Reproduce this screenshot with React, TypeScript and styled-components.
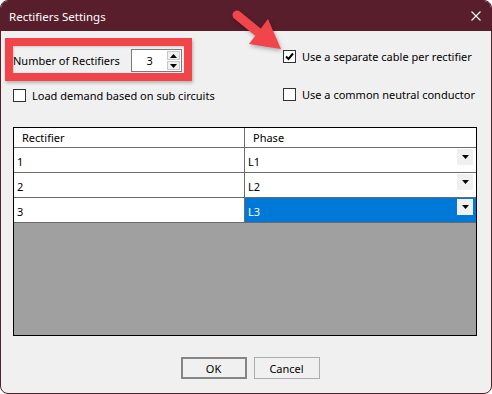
import React from "react";
import styled, { createGlobalStyle } from "styled-components";

const Global = createGlobalStyle`
  html, body { margin: 0; padding: 0; background: #ffffff; }
  body { font-family: "Noto Sans", "Open Sans", sans-serif; }
`;

const MAROON = "#581e2b";
const RED = "#f2444b";

const Window = styled.div`
  position: relative;
  width: 492px;
  height: 394px;
  box-sizing: border-box;
  border: 1px solid ${MAROON};
  border-radius: 8px;
  overflow: hidden;
  background: #f0f0f0;
  display: flex;
  flex-direction: column;
  font-size: 11px;
  color: #000;
`;

const TitleBar = styled.div`
  height: 30px;
  background: ${MAROON};
  display: flex;
  align-items: center;
  justify-content: space-between;
  padding: 0 10px 0 8px;
  flex: none;
`;

const Title = styled.span`
  color: #fff;
  font-size: 11.5px;
  line-height: 1;
  margin-top: 1px;
`;

const Body = styled.div`
  flex: 1;
  display: flex;
  flex-direction: column;
  padding: 18px 14px 0 12px;
`;

const Options = styled.div`
  display: grid;
  grid-template-columns: 270px 1fr;
  grid-template-rows: 23px 13px;
  row-gap: 16px;
`;

const SpinRow = styled.div`
  display: flex;
  align-items: center;
  gap: 11px;
`;

const Spinner = styled.div`
  display: flex;
  width: 51px;
  height: 23px;
  flex: none;
  box-sizing: border-box;
  border: 1px solid #7a7a7a;
  background: #fff;
`;

const SpinValue = styled.div`
  flex: 1;
  min-width: 0;
  display: flex;
  align-items: center;
  justify-content: flex-end;
  padding-right: 14px;
`;

const SpinButtons = styled.div`
  width: 14px;
  flex: none;
  display: flex;
  flex-direction: column;
  gap: 1px;
  padding: 1px 1px 1px 0;
  box-sizing: border-box;
`;

const SpinBtn = styled.div`
  flex: 1;
  background: #f0f0f0;
  border: 1px solid #c8c8c8;
  display: flex;
  align-items: center;
  justify-content: center;
`;

const CheckRow = styled.label<{ $top?: number }>`
  display: flex;
  align-items: center;
  gap: 6px;
  height: 13px;
  align-self: start;
  margin-top: ${(p) => p.$top ?? 0}px;
  white-space: nowrap;
`;

const Box = styled.span`
  width: 13px;
  height: 13px;
  box-sizing: border-box;
  border: 1px solid #333;
  background: #fff;
  display: flex;
  align-items: center;
  justify-content: center;
  flex: none;
`;

const Table = styled.div`
  margin-top: 26px;
  height: 209px;
  box-sizing: border-box;
  border: 1px solid #000;
  background: #a0a0a0;
  display: grid;
  grid-template-columns: 231px 1fr;
  grid-auto-rows: min-content;
`;

const HeadCell = styled.div<{ $last?: boolean }>`
  height: 20px;
  box-sizing: border-box;
  background: #fff;
  border-bottom: 1px solid #6b6b6b;
  border-right: ${(p) => (p.$last ? "none" : "1px solid #6b6b6b")};
  display: flex;
  align-items: center;
  padding-left: 8px;
`;

const Cell = styled.div<{ $last?: boolean; $selected?: boolean }>`
  position: relative;
  height: 25px;
  box-sizing: border-box;
  background: ${(p) => (p.$selected ? "#0078d7" : "#fff")};
  color: ${(p) => (p.$selected ? "#fff" : "#000")};
  border-bottom: 1px solid #6b6b6b;
  border-right: ${(p) => (p.$last ? "none" : "1px solid #6b6b6b")};
  display: flex;
  align-items: center;
  padding-left: 3px;
  padding-top: 3px;
`;

const DropBtn = styled.div`
  position: absolute;
  right: 3px;
  top: 1px;
  width: 16px;
  height: 16px;
  background: #f0f0f0;
  display: flex;
  align-items: center;
  justify-content: center;
`;

const Buttons = styled.div`
  margin-top: 21px;
  display: flex;
  justify-content: center;
  gap: 7px;
  padding-left: 10px;
`;

const Button = styled.button<{ $default?: boolean }>`
  width: 66px;
  height: 22px;
  box-sizing: border-box;
  border: ${(p) => (p.$default ? "2px solid #858585" : "1px solid #adadad")};
  background: #f0f0f0;
  font-family: inherit;
  font-size: 11px;
  color: #000;
  padding: 0;
`;

const Highlight = styled.div`
  position: absolute;
  left: 4px;
  top: 37px;
  width: 187px;
  height: 43px;
  box-sizing: border-box;
  border: 8px solid ${RED};
  box-shadow: 1px 2px 3px rgba(0, 0, 0, 0.25), inset 1px 1px 2px rgba(0,0,0,0.15);
  pointer-events: none;
`;

const ArrowSvg = styled.svg`
  position: absolute;
  left: 226px;
  top: 0;
  filter: drop-shadow(1px 2px 2px rgba(0, 0, 0, 0.3));
  pointer-events: none;
`;

const Tri = ({ up, color = "#000" }: { up?: boolean; color?: string }) => (
  <svg width="7" height="4" viewBox="0 0 7 4">
    <polygon points={up ? "0,4 7,4 3.5,0" : "0,0 7,0 3.5,4"} fill={color} />
  </svg>
);

const Check = ({ checked, children, top }: { checked?: boolean; children: React.ReactNode; top?: number }) => (
  <CheckRow $top={top}>
    <Box>
      {checked && (
        <svg width="9" height="9" viewBox="0 0 9 9">
          <path d="M1 4.5 L3.5 7 L8 1.5" stroke="#000" strokeWidth="2" fill="none" />
        </svg>
      )}
    </Box>
    <span>{children}</span>
  </CheckRow>
);

const rows = [
  { r: "1", p: "L1" },
  { r: "2", p: "L2" },
  { r: "3", p: "L3", sel: true },
];

export default function App() {
  return (
    <>
      <Global />
      <Window>
        <TitleBar>
          <Title>Rectifiers Settings</Title>
          <svg width="10" height="10" viewBox="0 0 10 10">
            <path d="M0.5 0.5 L9.5 9.5 M9.5 0.5 L0.5 9.5" stroke="#fff" strokeWidth="1.1" />
          </svg>
        </TitleBar>
        <Body>
          <Options>
            <SpinRow>
              <span>Number of Rectifiers</span>
              <Spinner>
                <SpinValue>3</SpinValue>
                <SpinButtons>
                  <SpinBtn><Tri up /></SpinBtn>
                  <SpinBtn><Tri /></SpinBtn>
                </SpinButtons>
              </Spinner>
            </SpinRow>
            <Check checked top={1}>Use a separate cable per rectifier</Check>
            <Check top={1}>Load demand based on sub circuits</Check>
            <Check>Use a common neutral conductor</Check>
          </Options>
          <Table>
            <HeadCell>Rectifier</HeadCell>
            <HeadCell $last>Phase</HeadCell>
            {rows.map((row) => (
              <React.Fragment key={row.r}>
                <Cell>{row.r}</Cell>
                <Cell $last $selected={row.sel}>
                  {row.p}
                  <DropBtn><Tri /></DropBtn>
                </Cell>
              </React.Fragment>
            ))}
          </Table>
          <Buttons>
            <Button $default>OK</Button>
            <Button>Cancel</Button>
          </Buttons>
        </Body>
        <Highlight />
        <ArrowSvg width="60" height="60" viewBox="0 0 60 60">
          <line x1="10" y1="14" x2="32" y2="32" stroke={RED} strokeWidth="9" strokeLinecap="round" />
          <polygon points="41,18 22,43 54,48" fill={RED} />
        </ArrowSvg>
      </Window>
    </>
  );
}
